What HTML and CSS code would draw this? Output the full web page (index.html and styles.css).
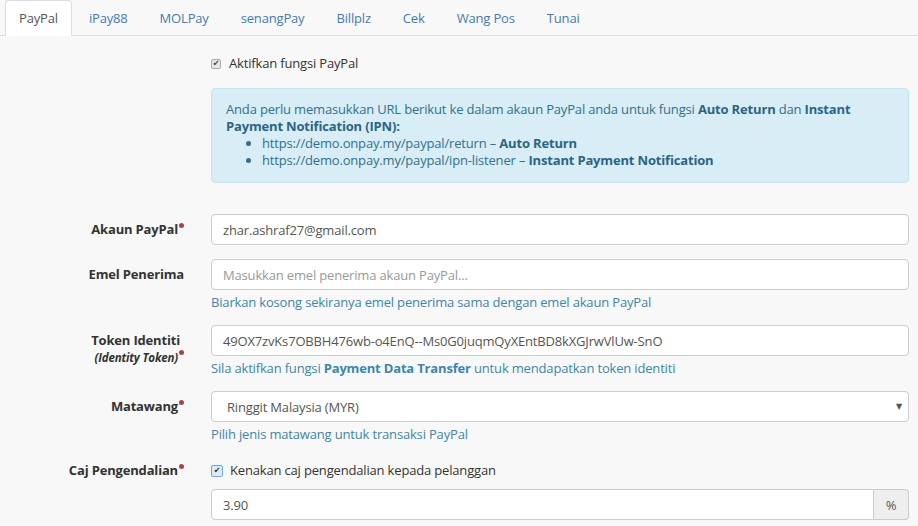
FILE: index.html
```html
<!DOCTYPE html>
<html>
<head>
<meta charset="utf-8">
<link rel="stylesheet" href="styles.css">
</head>
<body>
<div class="page">
  <ul class="tabs">
    <li class="tab active">PayPal</li>
    <li class="tab">iPay88</li>
    <li class="tab">MOLPay</li>
    <li class="tab">senangPay</li>
    <li class="tab">Billplz</li>
    <li class="tab">Cek</li>
    <li class="tab">Wang Pos</li>
    <li class="tab">Tunai</li>
  </ul>

  <div class="pane">
    <div class="row first">
      <div class="label"></div>
      <div class="field">
        <div class="check-row">
          <span class="cb cb-grey">✔</span>
          <span>Aktifkan fungsi PayPal</span>
        </div>
        <div class="alert">
          <p>Anda perlu memasukkan URL berikut ke dalam akaun PayPal anda untuk fungsi <b>Auto Return</b> dan <b>Instant Payment Notification (IPN):</b></p>
          <ul>
            <li>https://demo.onpay.my/paypal/return – <b>Auto Return</b></li>
            <li>https://demo.onpay.my/paypal/ipn-listener – <b>Instant Payment Notification</b></li>
          </ul>
        </div>
      </div>
    </div>

    <div class="row">
      <div class="label">Akaun PayPal<span class="req"></span></div>
      <div class="field">
        <div class="input">zhar.ashraf27@gmail.com</div>
      </div>
    </div>

    <div class="row">
      <div class="label">Emel Penerima</div>
      <div class="field">
        <div class="input placeholder">Masukkan emel penerima akaun PayPal...</div>
        <div class="help">Biarkan kosong sekiranya emel penerima sama dengan emel akaun PayPal</div>
      </div>
    </div>

    <div class="row">
      <div class="label"><span class="main">Token Identiti</span><span class="sub">(Identity Token)<span class="req"></span></span></div>
      <div class="field">
        <div class="input">49OX7zvKs7OBBH476wb-o4EnQ--Ms0G0juqmQyXEntBD8kXGJrwVlUw-SnO</div>
        <div class="help">Sila aktifkan fungsi <b>Payment Data Transfer</b> untuk mendapatkan token identiti</div>
      </div>
    </div>

    <div class="row">
      <div class="label">Matawang<span class="req"></span></div>
      <div class="field">
        <div class="input select">
          <span>Ringgit Malaysia (MYR)</span>
          <span class="caret">▼</span>
        </div>
        <div class="help">Pilih jenis matawang untuk transaksi PayPal</div>
      </div>
    </div>

    <div class="row">
      <div class="label label-cb">Caj Pengendalian<span class="req"></span></div>
      <div class="field">
        <div class="check-row check-row2">
          <span class="cb cb-blue">✔</span>
          <span>Kenakan caj pengendalian kepada pelanggan</span>
        </div>
        <div class="input-group">
          <div class="input grow">3.90</div>
          <div class="addon">%</div>
        </div>
      </div>
    </div>
  </div>
</div>
</body>
</html>
```

FILE: styles.css
```css
* { box-sizing: border-box; }
html, body { margin: 0; padding: 0; }
body {
  background: #f8f8f8;
  font-family: "Open Sans", "Noto Sans", sans-serif;
  font-size: 13px;
  letter-spacing: -0.17px;
  color: #333;
  width: 918px;
  height: 526px;
  overflow: hidden;
}
.page { padding: 0; }

.tabs {
  list-style: none;
  margin: 0;
  padding: 0 0 0 5px;
  display: flex;
  border-bottom: 1px solid #ddd;
  height: 36px;
}
.tab {
  height: 36px;
  line-height: 34px;
  padding: 0 14px;
  margin-right: 2px;
  color: #3f7cb6;
  border: 1px solid transparent;
  border-radius: 4px 4px 0 0;
}
.tab.active {
  background: #fff;
  color: #555;
  border-color: #ddd #ddd #fff #ddd;
  padding: 0 13px;
}

.pane { padding-top: 19px; padding-right: 9px; }

.row {
  display: grid;
  grid-template-columns: 184px 1fr;
  column-gap: 27px;
  margin-bottom: 14px;
}
.row.first { margin-bottom: 31px; }

.label {
  text-align: right;
  font-weight: 700;
  padding-top: 7px;
  line-height: 17px;
  color: #333;
}
.label .main { display: block; padding-right: 4px; }
.label .sub {
  display: block;
  font-style: italic;
  font-size: 11.5px;
  line-height: 17px;
}
.label-cb { padding-top: 5px; }
.req {
  display: inline-block;
  width: 5px;
  height: 5px;
  border-radius: 50%;
  background: #a94442;
  vertical-align: top;
  margin-top: 2px;
  margin-left: 1px;
}
.sub .req { margin-top: 1px; }

.check-row {
  display: flex;
  align-items: center;
  gap: 8px;
  height: 17px;
  line-height: 17px;
  color: #333;
}
.check-row2 { height: 27px; margin-bottom: 5px; gap: 7px; }

.cb {
  display: inline-flex;
  align-items: center;
  justify-content: center;
  width: 10px;
  height: 10px;
  border: 1px solid #aaa;
  border-radius: 2px;
  background: #e6e6e6;
  font-size: 8px;
  line-height: 1;
  color: #444;
  font-family: "DejaVu Sans", sans-serif;
  letter-spacing: 0;
}
.cb-blue {
  width: 12px;
  height: 12px;
  border-color: #6fa6e2;
  background: #dce9f8;
  color: #333;
}

.alert {
  margin-top: 16px;
  background: #d9edf7;
  border: 1px solid #bce8f1;
  border-radius: 4px;
  color: #31708f;
  padding: 12px 14px 13px 14px;
  line-height: 17px;
}
.alert p { margin: 0; }
.alert ul { margin: 0; padding-left: 36px; }
.alert b { font-weight: 700; color: #2a6584; }

.input {
  height: 31px;
  border: 1px solid #ccc;
  border-radius: 4px;
  background: #fff;
  color: #555;
  padding: 0 11px;
  display: flex;
  align-items: center;
  white-space: nowrap;
  overflow: hidden;
}
.input.placeholder { color: #999; }
.select {
  padding-left: 15px;
  justify-content: space-between;
  padding-right: 6px;
}
.caret { font-size: 8px; color: #555; font-family: "DejaVu Sans", sans-serif; }

.help {
  margin-top: 3px;
  line-height: 18px;
  color: #3a87ad;
}
.help b { font-weight: 700; }

.input-group { display: flex; }
.grow { flex: 1; border-radius: 4px 0 0 4px; }
.addon {
  width: 35px;
  height: 31px;
  border: 1px solid #ccc;
  border-left: 0;
  border-radius: 0 4px 4px 0;
  background: #eee;
  color: #555;
  display: flex;
  align-items: center;
  justify-content: center;
}
```
